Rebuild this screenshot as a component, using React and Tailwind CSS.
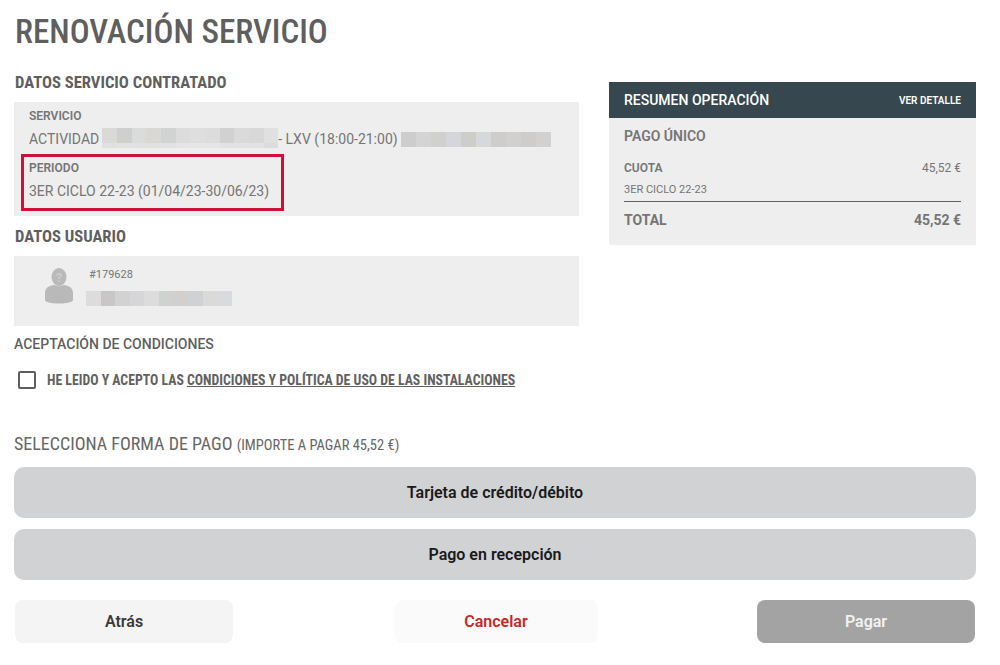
import React from 'react';

const FONT = "font-['Roboto','Liberation_Sans',sans-serif]";

const patchOneTop = ['bg-[#d9d9d7]', 'bg-[#cfcfcf]', 'bg-[#d9dcdb]', 'bg-[#d9d8d5]', 'bg-[#d1d3d2]', 'bg-[#dcdcdc]', 'bg-[#dedede]', 'bg-[#dcdcdc]', 'bg-[#d1d1d1]', 'bg-[#dadada]', 'bg-[#d8d8d8]', 'bg-[#e0e0e0]'];
const patchOneBottom = ['bg-[#e0e0de]', 'bg-[#e2e2e0]', 'bg-[#e0e2e1]', 'bg-[#e0e0de]', 'bg-[#e2e2e2]', 'bg-[#e6e4e4]', 'bg-[#e6e6e8]', 'bg-[#e6e6e6]', 'bg-[#e2e2e0]', 'bg-[#e2e2e2]', 'bg-[#e2e2e2]', 'bg-[#dcdcdc]'];
const patchTwo = ['bg-[#cdcdcd]', 'bg-[#d4d4d4]', 'bg-[#d0d0ce]', 'bg-[#d4d6d9]', 'bg-[#cdcdca]', 'bg-[#d6d8da]', 'bg-[#cfcdcb]', 'bg-[#d1d0ce]', 'bg-[#cfcdcc]', 'bg-[#d1d1d1]'];
const patchUser = ['bg-[#dcdcdc]', 'bg-[#c8c6c6]', 'bg-[#d2d2d2]', 'bg-[#d6d6d8]', 'bg-[#dcdcdc]', 'bg-[#d0d2d0]', 'bg-[#d2cfcd]', 'bg-[#cfd1d2]', 'bg-[#dadad8]', 'bg-[#d8dade]'];

const Mosaic = ({ cells, className }) => (
  <span className={`flex ${className}`}>
    {cells.map((c, i) => (
      <span key={i} className={`flex-1 ${c}`} />
    ))}
  </span>
);

const SectionTitle = ({ children }) => (
  <h2 className="pl-px text-[16.600px] leading-[20px] font-bold text-[#5f5f5f] [font-stretch:75%]">{children}</h2>
);

const Label = ({ children }) => (
  <div className="text-[12px] leading-[16px] font-semibold text-[#757575]">{children}</div>
);

export default function App() {
  return (
    <div className={`${FONT} w-[1000px] h-[665px] bg-white px-[14px] overflow-hidden`}>
      <h1 className="pt-[12px] pl-px text-[33.100px] leading-[40px] font-medium text-[#5f5f5f] [font-stretch:75%]">RENOVACIÓN SERVICIO</h1>

      <div className="flex mt-[21px]">
        {/* Left column */}
        <div className="w-[565px]">
          <SectionTitle>DATOS SERVICIO CONTRATADO</SectionTitle>
          <div className="mt-[9px] h-[114px] bg-[#eeeeee] px-[15px] pt-[6px]">
            <Label>SERVICIO</Label>
            <div className="flex items-center mt-[5px] h-[20px] text-[14px] text-[#757575] whitespace-nowrap">
              <span>ACTIVIDAD</span>
              <span className="flex flex-col w-[176px] h-[20px] ml-[3px] mt-[-2px]">
                <Mosaic cells={patchOneTop} className="h-[15px]" />
                <Mosaic cells={patchOneBottom} className="h-[5px]" />
              </span>
              <span>- LXV (18:00-21:00)</span>
              <Mosaic cells={patchTwo} className="w-[150px] h-[15px] ml-[3px] mt-[1px]" />
            </div>
            <div className="-ml-[8px] mt-[5px] w-[263px] h-[57px] border-[3px] border-[#d0103a] pl-[5px] pt-[3px]">
              <Label>PERIODO</Label>
              <div className="mt-[6px] text-[14px] leading-[18px] text-[#757575]">3ER CICLO 22-23 (01/04/23-30/06/23)</div>
            </div>
          </div>

          <div className="mt-[11px]">
            <SectionTitle>DATOS USUARIO</SectionTitle>
          </div>
          <div className="mt-[9px] h-[70px] bg-[#eeeeee] flex">
            <svg className="ml-[30px] mt-[11px] w-[30px] h-[37px]" viewBox="0 0 30 37">
              <ellipse cx="15" cy="10" rx="7.500" ry="9" fill="#b9b9b9" />
              <path d="M11 18c1 1.500 7 1.500 8 0 6.500.5 10 3 10 8v7c0 2-6 3.500-14 3.500S1 35 1 33v-7c0-5 3.500-7.500 10-8z" fill="#b9b9b9" />
              <text x="15" y="15" textAnchor="middle" fontSize="13" fontWeight="700" fill="#cccccc">?</text>
            </svg>
            <div className="ml-[12px] pt-[12px]">
              <div className="ml-[3px] text-[11px] leading-[14px] text-[#757575]">#179628</div>
              <Mosaic cells={patchUser} className="w-[146px] h-[15px] mt-[9px]" />
            </div>
          </div>

          <div className="mt-[8px]">
            <h2 className="text-[14px] leading-[20px] font-medium text-[#5f5f5f]">ACEPTACIÓN DE CONDICIONES</h2>
          </div>
          <div className="flex items-center mt-[17px] ml-[4px]">
            <span className="w-[18px] h-[18px] border-2 border-[#5f5f5f] rounded-[2px] bg-white" />
            <span className="ml-[11px] text-[13.750px] leading-[18px] font-bold text-[#616161] [font-stretch:75%]">
              HE LEIDO Y ACEPTO LAS <a className="underline">CONDICIONES Y POLÍTICA DE USO DE LAS INSTALACIONES</a>
            </span>
          </div>
        </div>

        {/* Right column */}
        <div className="ml-[30px] mt-[9px] w-[367px] h-[163px] bg-[#eeeeee] self-start">
          <div className="flex items-center justify-between h-[36px] bg-[#37474f] px-[15px] text-white">
            <span className="text-[14px] font-medium">RESUMEN OPERACIÓN</span>
            <span className="text-[10px] font-semibold">VER DETALLE</span>
          </div>
          <div className="px-[15px] text-[#757575]">
            <div className="pt-[9px] text-[14px] leading-[18px] font-semibold [font-stretch:92%]">PAGO ÚNICO</div>
            <div className="flex justify-between mt-[15px] text-[12px] leading-[16px]">
              <span className="font-semibold">CUOTA</span>
              <span>45,52 €</span>
            </div>
            <div className="mt-[6px] pb-[3px] text-[11px] leading-[16px] border-b border-[#616161]">3ER CICLO 22-23</div>
            <div className="flex justify-between pt-[9px] text-[14px] leading-[18px] font-bold">
              <span>TOTAL</span>
              <span>45,52 €</span>
            </div>
          </div>
        </div>
      </div>

      <div className="mt-[43px] text-[18px] leading-[24px] text-[#666666] [font-stretch:85%]">
        SELECCIONA FORMA DE PAGO <span className="text-[14.500px]">(IMPORTE A PAGAR 45,52 €)</span>
      </div>

      <div className="mt-[9px] w-[962px] flex flex-col gap-[11px]">
        <button className="h-[51px] rounded-[10px] bg-[#d1d2d4] text-[16px] font-semibold text-[#1a1a1a]">Tarjeta de crédito/débito</button>
        <button className="h-[51px] rounded-[10px] bg-[#d1d2d4] text-[16px] font-semibold text-[#1a1a1a]">Pago en recepción</button>
      </div>

      <div className="mt-[20px] w-[961px] flex justify-between items-start">
        <button className="w-[218px] ml-px h-[43px] rounded-[8px] bg-[#f4f4f4] text-[16px] font-semibold text-[#3a3a3a]">Atrás</button>
        <button className="w-[203px] ml-[2px] h-[43px] rounded-[8px] bg-[#fafafa] text-[16px] font-semibold text-[#c62828]">Cancelar</button>
        <button className="w-[218px] h-[43px] rounded-[8px] bg-[#a3a3a3] text-[16px] font-semibold text-[#f2f2f2]">Pagar</button>
      </div>
    </div>
  );
}
